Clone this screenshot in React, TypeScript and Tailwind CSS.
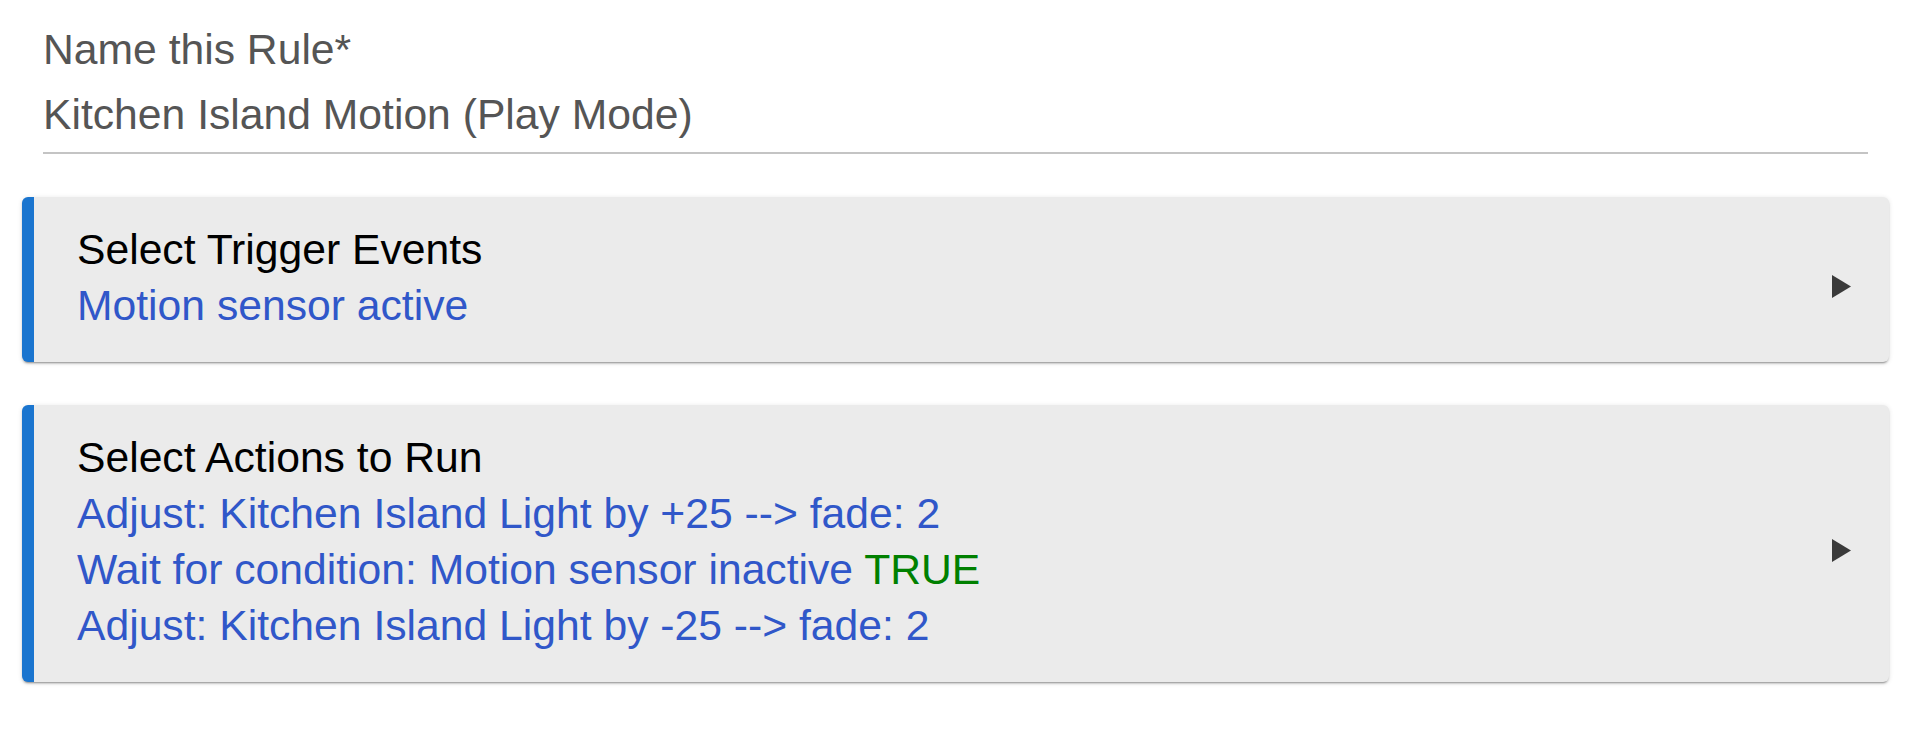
import React from "react";

const blue = "text-[#3057c9]";

function Arrow() {
  return (
    <svg className="w-[19px] h-[23px] mt-[18px] shrink-0" viewBox="0 0 19 23">
      <path d="M0 0 L19 11.5 L0 23 Z" fill="#3a3a3a" />
    </svg>
  );
}

function RuleCard({ title, children }: { title: string; children: React.ReactNode }) {
  return (
    <div className="flex items-center bg-[#ebebeb] border-l-[12px] border-[#1a75cf] rounded-md pl-[43px] pr-[38px] pt-[24px] pb-[29px] shadow-[0_2px_2px_0_rgba(0,0,0,0.14),0_3px_1px_-2px_rgba(0,0,0,0.2),0_1px_5px_0_rgba(0,0,0,0.12)]">
      <div className="flex-1 text-[42.67px] leading-[56px]">
        <div className="text-black">{title}</div>
        {children}
      </div>
      <Arrow />
    </div>
  );
}

export default function App() {
  return (
    <div className="min-h-[750px] bg-white pl-[22px] pr-[32px] font-['Liberation_Sans',Arial,sans-serif]">
      <div className="px-[21px] pt-[21px]">
        <div className="text-[42.67px] leading-[56px] text-[#555]">Name this Rule*</div>
        <div className="mt-[9px] pb-[10px] border-b-2 border-[#c4c4c4] text-[42.67px] leading-[56px] text-[#555]">
          Kitchen Island Motion (Play Mode)
        </div>
      </div>

      <div className="mt-[43px] flex flex-col gap-[43px]">
        <RuleCard title="Select Trigger Events">
          <div className={blue}>Motion sensor active</div>
        </RuleCard>
        <RuleCard title="Select Actions to Run">
          <div className={blue}>Adjust: Kitchen Island Light by +25 --&gt; fade: 2</div>
          <div className={blue}>
            Wait for condition: Motion sensor inactive <span className="text-[#008000]">TRUE</span>
          </div>
          <div className={blue}>Adjust: Kitchen Island Light by -25 --&gt; fade: 2</div>
        </RuleCard>
      </div>
    </div>
  );
}
